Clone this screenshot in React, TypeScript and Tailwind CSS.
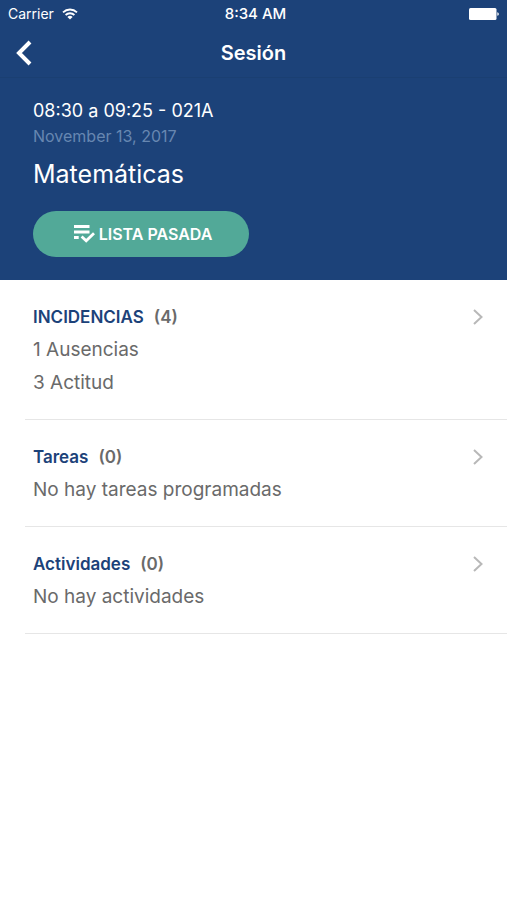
import { ReactNode } from 'react';

interface SectionProps {
  title: string;
  count: number;
  children: ReactNode;
}

const WifiIcon = () => (
  <svg className="h-3 w-4" viewBox="0 0 16 12" fill="none" stroke="#fff" strokeWidth="1.8">
    <path d="M1 4.3a10.2 10.2 0 0 1 14 0" />
    <path d="M3.6 7a6.4 6.4 0 0 1 8.8 0" />
    <path d="M8 11.6 5.4 9a3.8 3.8 0 0 1 5.2 0z" fill="#fff" stroke="none" />
  </svg>
);

const BatteryIcon = () => (
  <svg className="h-3 w-[30px]" viewBox="0 0 30 12" fill="#fff">
    <rect x="0" y="0" width="27.5" height="12" rx="1.5" />
    <path d="M28.3 4.2c1 .2 1.5.9 1.5 1.8s-.5 1.6-1.5 1.8z" />
  </svg>
);

const BackIcon = () => (
  <svg className="h-[26px] w-4" viewBox="0 0 16 26" fill="none">
    <path d="M14 2 3 13l11 11" stroke="#fff" strokeWidth="4" />
  </svg>
);

const ListCheckIcon = () => (
  <svg className="h-[18px] w-[21px]" viewBox="0 0 21 18" fill="none">
    <path d="M0 1.5h15.5M0 7h15.5M0 12.5h4.7" stroke="#fff" strokeWidth="2.8" />
    <path d="m7.6 11.4 4.6 4.4 7.8-7.6" stroke="#fff" strokeWidth="2.8" />
  </svg>
);

const ChevronIcon = () => (
  <svg className="h-4 w-[10px]" viewBox="0 0 10 16" fill="none">
    <path d="m1 1 7.5 7L1 15" stroke="#b8b8b8" strokeWidth="2" />
  </svg>
);

const Section = ({ title, count, children }: SectionProps) => {
  return (
    <section className="ml-[25px] border-b border-[#e6e6e6] py-5 pl-2 pr-6 text-[#6a6a6a]">
      <a href="#" className="flex h-[33px] items-center justify-between">
        <h2 className="flex gap-[10px] pt-px text-[17px] leading-[33px] font-semibold">
          <span className="text-[#1c4279]">{title}</span>
          <span>({count})</span>
        </h2>
        <ChevronIcon />
      </a>
      <div className="text-[19px] leading-[33px]">{children}</div>
    </section>
  );
};

export default function App() {
  return (
    <div className="min-h-screen bg-white font-['Inter',sans-serif]">
      <header className="bg-[#1c4279] text-white">
        <div className="grid h-7 grid-cols-3 items-center px-2 text-[14px] leading-[26px]">
          <div className="flex items-center gap-2">
            <span>Carrier</span>
            <WifiIcon />
          </div>
          <span className="pl-1 text-center text-[15px] font-medium">8:34 AM</span>
          <div className="flex justify-end">
            <BatteryIcon />
          </div>
        </div>
        <nav className="grid h-[50px] grid-cols-3 items-center border-b border-[#1a3f72] px-4">
          <button type="button" aria-label="Volver" className="justify-self-start">
            <BackIcon />
          </button>
          <h1 className="text-center text-[20px] leading-6 font-semibold">Sesión</h1>
        </nav>
        <div className="px-[33px] pb-[23px] pt-5">
          <p className="text-[18px] leading-[26px]">08:30 a 09:25 - 021A</p>
          <p className="text-[16px] leading-6 text-[#6787b1]">November 13, 2017</p>
          <p className="mt-2 text-[25px] leading-9">Matemáticas</p>
          <button
            type="button"
            className="mt-[19px] flex h-[46px] w-[216px] items-center justify-center gap-1 rounded-full bg-[#52a998] pl-1 text-[16px] font-semibold"
          >
            <ListCheckIcon />
            LISTA PASADA
          </button>
        </div>
      </header>
      <main>
        <Section title="INCIDENCIAS" count={4}>
          <p>1 Ausencias</p>
          <p>3 Actitud</p>
        </Section>
        <Section title="Tareas" count={0}>
          <p>No hay tareas programadas</p>
        </Section>
        <Section title="Actividades" count={0}>
          <p>No hay actividades</p>
        </Section>
      </main>
    </div>
  );
}
